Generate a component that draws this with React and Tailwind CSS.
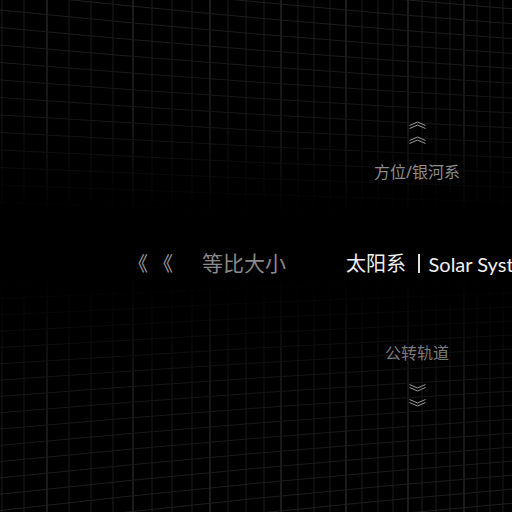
import React from "react";

const VX = [-48, 2, 24, 47, 69, 91, 113, 133, 152, 172, 192, 210, 228, 246, 264, 281, 298, 314, 330, 346, 362, 378, 393, 408, 422, 436, 450, 464, 477, 490, 503, 516];

function Grid() {
  const top = [];
  for (let yl = -95; yl <= 215; yl += 17.5) {
    const yr = 0.85 * yl + 45;
    const yc = yl + 0.6 * (yr - yl);
    top.push(`M0 ${yl} Q256 ${yc} 512 ${yr}`);
  }
  const bottom = [];
  for (let yl = 266; yl <= 620; yl += 16.3) {
    const yr = 258 + 0.86 * (yl - 258) - 14;
    const yc = yl + 0.6 * (yr - yl);
    bottom.push(`M0 ${yl} Q256 ${yc} 512 ${yr}`);
  }
  return (
    <svg className="absolute inset-0" width="512" height="512" viewBox="0 0 512 512">
      <defs>
        <linearGradient id="fade" gradientUnits="userSpaceOnUse" x1="0" y1="0" x2="0" y2="512">
          <stop offset="0" stopColor="#fff" />
          <stop offset="0.25" stopColor="#bbb" />
          <stop offset="0.42" stopColor="#000" />
          <stop offset="0.54" stopColor="#000" />
          <stop offset="0.75" stopColor="#bbb" />
          <stop offset="1" stopColor="#fff" />
        </linearGradient>
        <mask id="m">
          <rect x="0" y="0" width="512" height="512" fill="url(#fade)" />
        </mask>
      </defs>
      <g mask="url(#m)" fill="none">
        {VX.map((x, i) => (
          <line key={i} x1={x} y1="0" x2={x} y2="512" stroke={i % 4 === 3 ? "#383838" : "#1c1c1c"} strokeWidth="1" />
        ))}
        {top.map((d, i) => (
          <path key={"t" + i} d={d} stroke="#1e1e1e" strokeWidth="1" />
        ))}
        {bottom.map((d, i) => (
          <path key={"b" + i} d={d} stroke="#1e1e1e" strokeWidth="1" />
        ))}
      </g>
    </svg>
  );
}

function Chevrons({ down }) {
  return (
    <svg width="17" height="23" viewBox="0 0 17 23" fill="none" stroke="#9a9a9a" strokeWidth="1" className={down ? "rotate-180" : ""}>
      <polyline points="0.5,4.5 8.5,1 16.5,4.5" />
      <polyline points="0.5,7.5 8.5,4 16.5,7.5" />
      <polyline points="0.5,19.5 8.5,16 16.5,19.5" />
      <polyline points="0.5,22.5 8.5,19 16.5,22.5" />
    </svg>
  );
}

export default function App() {
  return (
    <div className="relative w-[512px] h-[512px] bg-black overflow-hidden" style={{ fontFamily: '"Noto Sans", "Noto Sans CJK SC", sans-serif' }}>
      <Grid />
      <div className="relative flex flex-col">
        <div className="pt-[121px] ml-[357px] w-[120px] flex flex-col items-center">
          <Chevrons />
          <div className="mt-[20px] text-[16px] leading-none text-[#8c8c8c] whitespace-nowrap">方位/银河系</div>
        </div>
        <div className="mt-[73px] flex items-center whitespace-nowrap leading-none text-[20px]">
          <div className="ml-[128px] flex text-[#9a9a9a] text-[20px]">
            <span>《</span>
            <span className="ml-[5px]">《</span>
          </div>
          <div className="ml-[29px] text-[#8a8a8a] text-[21px]">等比大小</div>
          <div className="ml-[60px] text-[#f0f0f0] flex items-center">
            <span>太阳系</span>
            <span className="ml-[12px] mr-[9px] w-[1.5px] h-[19px] bg-[#e0e0e0]"></span>
            <span className="font-['Lato','Noto_Sans',sans-serif]">Solar System</span>
          </div>
        </div>
        <div className="mt-[71px] ml-[357px] w-[120px] flex flex-col items-center">
          <div className="text-[16px] leading-none text-[#7a7a7a] whitespace-nowrap">公转轨道</div>
          <div className="mt-[23px]">
            <Chevrons down />
          </div>
        </div>
      </div>
    </div>
  );
}
